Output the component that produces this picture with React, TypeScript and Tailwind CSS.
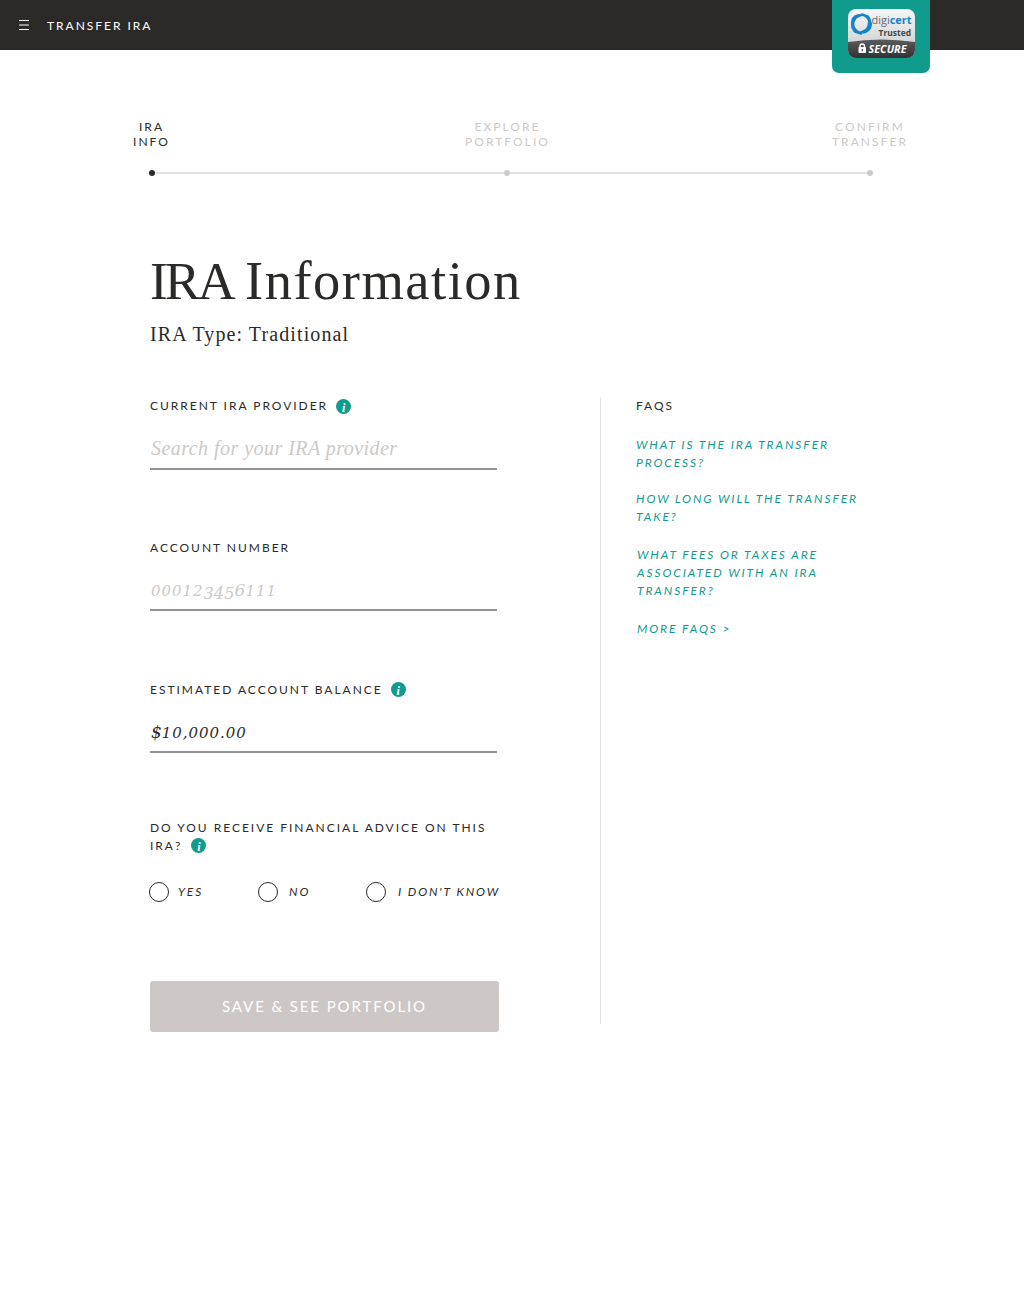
import type { ReactNode } from "react";

const LABEL = "text-[12px] leading-[18px] tracking-[1.98px] whitespace-nowrap";

function Info({ className = "" }: { className?: string }) {
  return (
    <span
      className={`inline-flex size-[15px] shrink-0 items-center justify-center rounded-full bg-[#119b8d] pt-[3px] font-['Liberation_Serif',serif] text-[12px] leading-[12px] font-bold tracking-normal text-white italic ${className}`}
    >
      i
    </span>
  );
}

/* Old-style figures: 0-2 sit at x-height, 3-5 drop below the baseline. */
function Figures({ value }: { value: string }) {
  const runs = value.match(/[012.,]+|[345]+|[^0-5.,]+/g) ?? [];
  return (
    <span className="font-['DejaVu_Serif',serif]">
      {runs.map((run, i) =>
        /[012]/.test(run) ? (
          <span key={i} className="text-[15px] tracking-[0.95px]">{run}</span>
        ) : /[345]/.test(run) ? (
          <span key={i} className="align-[-3px] text-[16px] leading-none tracking-[0.2px]">{run}</span>
        ) : (
          <span key={i} className="text-[17px]">{run}</span>
        )
      )}
    </span>
  );
}

function Field({ label, shift = "", info, color, children }: { label: string; shift?: string; info?: string; color: string; children: ReactNode }) {
  return (
    <div className="h-[73px] w-[347px] border-b-2 border-[#939393]">
      <div className="flex h-[18px] items-center">
        <span className={`${LABEL} ${shift}`}>{label}</span>
        {info && <Info className={info} />}
      </div>
      <div className={`mt-[20px] h-[26px] pl-px font-['Liberation_Serif',serif] text-[20px] leading-[26px] whitespace-nowrap italic ${color}`}>
        {children}
      </div>
    </div>
  );
}

function Radio({ label, className, gap }: { label: string; className: string; gap: string }) {
  return (
    <label className={`flex items-center ${className} ${gap}`}>
      <span className="size-5 shrink-0 rounded-full border border-[#2b2a28]" />
      <span className="text-[12px] leading-[18px] tracking-[1.88px] whitespace-nowrap italic">{label}</span>
    </label>
  );
}

function Seal() {
  return (
    <svg width="67" height="49" viewBox="0 0 67 49" className="shrink-0 overflow-visible">
      <defs>
        <linearGradient id="silver" x1="0" y1="0" x2="0" y2="1">
          <stop offset="0" stopColor="#f7f7f7" />
          <stop offset="1" stopColor="#c4c6c7" />
        </linearGradient>
        <linearGradient id="dark" x1="0" y1="0" x2="0" y2="1">
          <stop offset="0" stopColor="#5b5c5d" />
          <stop offset="1" stopColor="#303132" />
        </linearGradient>
        <clipPath id="seal"><rect width="67" height="49" rx="8" /></clipPath>
      </defs>
      <g clipPath="url(#seal)">
        <rect width="67" height="49" fill="url(#silver)" />
        <path d="M0 33Q33 28 67 33V49H0Z" fill="url(#dark)" />
      </g>
      <g fill="#1682c8">
        <path d="M3 15Q2.500 7 9.500 5.200Q13.500 4.300 17.500 6.500Q11 7.200 8.200 10Q6 12.500 6 17.500L3.800 20Q3.200 17.500 3 15Z" />
        <path d="M13.500 4L20.500 6.500Q24 10 23.200 16.500L20.500 20Q21.300 12.500 18.300 9.300Q16.500 7.300 12.500 6.500Z" />
        <path d="M24 13.500Q24.500 21.500 18 24Q13.500 25.500 9 23.200Q15.500 22 18 19.300Q19.800 17 20 13Z" />
        <path d="M13.500 26L6.500 23.700Q2.500 20 3.600 14L6 10.500Q5.300 17 8.500 20.300Q10.500 22.500 14.500 23.500Z" />
      </g>
      <text x="23.5" y="15" fontFamily="Open Sans" fontSize="11" textLength="40" lengthAdjust="spacingAndGlyphs" fill="#616568">
        digi<tspan fill="#1682c8" fontWeight="700">cert</tspan>
      </text>
      <text x="30.5" y="27" fontFamily="Open Sans" fontSize="9.5" fontWeight="700" textLength="32.5" lengthAdjust="spacingAndGlyphs" fill="#444648">Trusted</text>
      <rect x="10.5" y="38" width="7.5" height="6" rx=".8" fill="#fff" />
      <path d="M12 39V37.3a2.25 2.25 0 0 1 4.5 0V39" fill="none" stroke="#fff" strokeWidth="1.4" />
      <path d="M14.25 40v2.2" stroke="#444" strokeWidth="1.2" />
      <text x="20.5" y="43.8" fontFamily="Open Sans" fontSize="11" fontWeight="700" fontStyle="italic" textLength="38" lengthAdjust="spacingAndGlyphs" fill="#fff">SECURE</text>
    </svg>
  );
}

export default function App() {
  return (
    <div className="min-h-[1293px] w-[1024px] bg-white font-['Lato',sans-serif] text-[#2b2a28]">
      <header className="flex h-[50px] items-center bg-[#2b2a28] pl-[19px] text-white">
        <svg width="10" height="10" viewBox="0 0 10 10" className="shrink-0">
          <path d="M0 .5h10M0 5h10M0 9.5h10" stroke="#fff" strokeWidth="1.2" />
        </svg>
        <span className="ml-[18px] w-[785px] pt-px text-[12px] leading-[18px] tracking-[1.98px]">TRANSFER IRA</span>
        <div className="z-10 flex h-[73px] w-[98px] shrink-0 justify-center self-start rounded-b-[7px] bg-[#119b8d] pt-[9px]">
          <Seal />
        </div>
      </header>

      <nav className="mt-[69px] text-[12px] leading-[15px] tracking-[2.05px]">
        <div className="flex text-center text-[#cdc9c6]">
          <div className="ml-[101px] w-[101px] text-[#2b2a28]">IRA<br />INFO</div>
          <div className="ml-[255px] w-[101px]">EXPLORE<br />PORTFOLIO</div>
          <div className="ml-[262px] w-[100px]">CONFIRM<br />TRANSFER</div>
        </div>
        <div className="mt-[21px] ml-[149px] flex items-center">
          <i className="size-1.5 rounded-full bg-[#2b2a28]" />
          <i className="h-0.5 w-[349px] bg-[#e3e2e1]" />
          <i className="size-1.5 rounded-full bg-[#cdc9c6]" />
          <i className="h-0.5 w-[357px] bg-[#e3e2e1]" />
          <i className="size-1.5 rounded-full bg-[#cdc9c6]" />
        </div>
      </nav>

      <main className="pt-[73px] pl-[150px]">
        <h1 className="h-[64px] font-['Liberation_Serif',serif] text-[54.5px] leading-[64px] tracking-[1.5px] whitespace-nowrap">
          <span className="text-[53px] tracking-[-2.8px]">IRA</span><span className="tracking-[-1.5px]"> </span>Information
        </h1>
        <p className="mt-[8px] h-[26px] font-['Liberation_Serif',serif] text-[20px] leading-[26px] tracking-[1.1px]">IRA Type: Traditional</p>

        <div className="mt-[50px] flex">
          <section className="w-[450px]">
            <Field label="CURRENT IRA PROVIDER" info="ml-[8px]" color="text-[#cdc9c6]">
              <span className="tracking-[0.46px]">Search for your IRA provider</span>
            </Field>
            <div className="h-[68px]" />
            <Field label="ACCOUNT NUMBER" shift="pt-[2px]" color="text-[#cdc9c6]"><Figures value="000123456111" /></Field>
            <div className="h-[69px]" />
            <Field label="ESTIMATED ACCOUNT BALANCE" shift="pt-[2px]" info="ml-[8px]" color="text-[#2b2a28]"><Figures value="$10,000.00" /></Field>

            <div className={`mt-[66px] ${LABEL}`}>
              <div>DO YOU RECEIVE FINANCIAL ADVICE ON THIS</div>
              <div className="flex items-center">IRA?<Info className="mb-[2px] ml-[9px]" /></div>
            </div>
            <div className="-ml-px mt-[27px] flex h-5">
              <Radio label="YES" className="w-[109px]" gap="gap-[9px]" />
              <Radio label="NO" className="w-[108px]" gap="gap-[11px]" />
              <Radio label="I DON'T KNOW" className="" gap="gap-[12px]" />
            </div>
            <button className="mt-[79px] h-[51px] w-[349px] rounded-[3px] bg-[#cdc8c5] text-[15px] tracking-[1.9px] text-white">
              SAVE &amp; SEE PORTFOLIO
            </button>
          </section>

          <aside className={`h-[627px] border-l border-[#e3e2e1] pl-[35px] ${LABEL}`}>
            <h2>FAQS</h2>
            <div className="tracking-[1.9px] text-[#119b8d] italic">
              <p className="mt-[21px]">WHAT IS THE IRA TRANSFER<br />PROCESS?</p>
              <p className="mt-[18px]">HOW LONG WILL THE TRANSFER<br />TAKE?</p>
              <p className="mt-[20px] ml-px">WHAT FEES OR TAXES ARE<br />ASSOCIATED WITH AN IRA<br />TRANSFER?</p>
              <p className="mt-[20px] ml-px">MORE FAQS &gt;</p>
            </div>
          </aside>
        </div>
      </main>
    </div>
  );
}
